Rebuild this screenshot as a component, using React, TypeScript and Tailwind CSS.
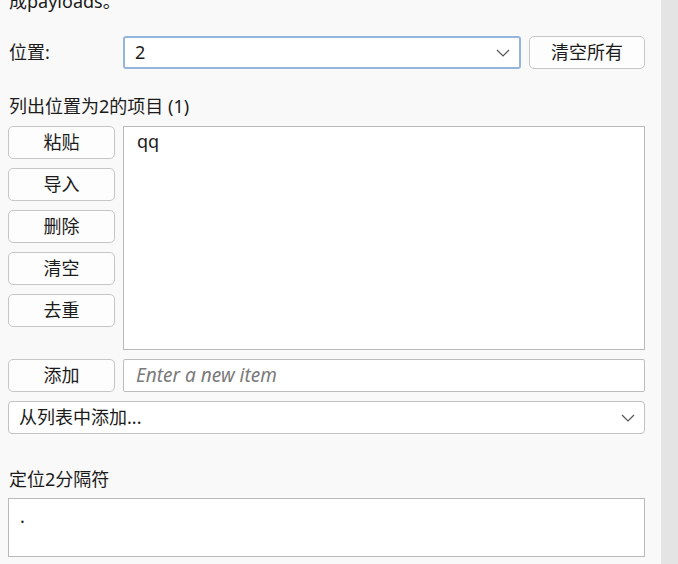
const font = { fontFamily: '"Noto Sans", "Noto Sans CJK SC", sans-serif' };

function Chevron() {
  return (
    <svg width="14" height="8" viewBox="0 0 14 8" className="shrink-0">
      <path d="M1 1 L7 7 L13 1" fill="none" stroke="#555" strokeWidth="1.2" />
    </svg>
  );
}

function SideButton({ label }: { label: string }) {
  return (
    <button className="h-[33px] w-full rounded-[5px] border border-[#c6c6c6] bg-[#fdfdfd] text-[18px] text-[#1b1b1b]">
      {label}
    </button>
  );
}

const sideActions = ["粘贴", "导入", "删除", "清空", "去重"];

export default function App() {
  return (
    <div className="flex h-[564px] w-[678px] overflow-hidden bg-[#f9f9f9] text-[#1b1b1b]" style={font}>
      <div className="flex w-[661px] flex-col pl-[8px] pr-[16px] text-[18px]">
        <div className="mt-[-11px] h-[24px] pl-[1px] leading-[24px]">成payloads。</div>

        {/* position row */}
        <div className="mt-[23px] flex h-[33px] items-center gap-[8px]">
          <span className="w-[107px] pl-[1px]">位置:</span>
          <div className="flex h-full flex-1 items-center justify-between rounded-[3px] border-2 border-[#94b6dc] bg-white pl-[10px] pr-[9px]">
            <span>2</span>
            <Chevron />
          </div>
          <button className="h-full w-[116px] rounded-[5px] border border-[#c6c6c6] bg-[#fdfdfd]">
            清空所有
          </button>
        </div>

        <div className="mt-[25px] h-[24px] pl-[1px] leading-[24px]">列出位置为2的项目 (1)</div>

        {/* list area */}
        <div className="mt-[8px] flex h-[224px] gap-[8px]">
          <div className="flex w-[107px] flex-col gap-[9px]">
            {sideActions.map((a) => (
              <SideButton key={a} label={a} />
            ))}
          </div>
          <div className="flex-1 border border-[#b9b9b9] bg-white px-[13px] pt-[1px] leading-[26px]">qq</div>
        </div>

        {/* add row */}
        <div className="mt-[9px] flex h-[33px] gap-[8px]">
          <div className="w-[107px]">
            <SideButton label="添加" />
          </div>
          <div className="flex flex-1 items-center rounded-[2px] border border-[#bdbdbd] bg-white px-[12px] text-[19px] italic text-[#7a7a7a]">
            Enter a new item
          </div>
        </div>

        <div className="mt-[9px] flex h-[33px] items-center justify-between rounded-[4px] border border-[#c2c2c2] bg-white pl-[10px] pr-[9px]">
          <span>从列表中添加...</span>
          <Chevron />
        </div>

        <div className="mt-[33px] h-[24px] pl-[1px] leading-[24px]">定位2分隔符</div>

        <div className="mt-[7px] h-[59px] border border-[#b9b9b9] bg-white px-[11px] pt-[5px] leading-[24px]">.</div>
      </div>
      <div className="h-full w-[17px] bg-[#e4e4e4]" />
    </div>
  );
}
